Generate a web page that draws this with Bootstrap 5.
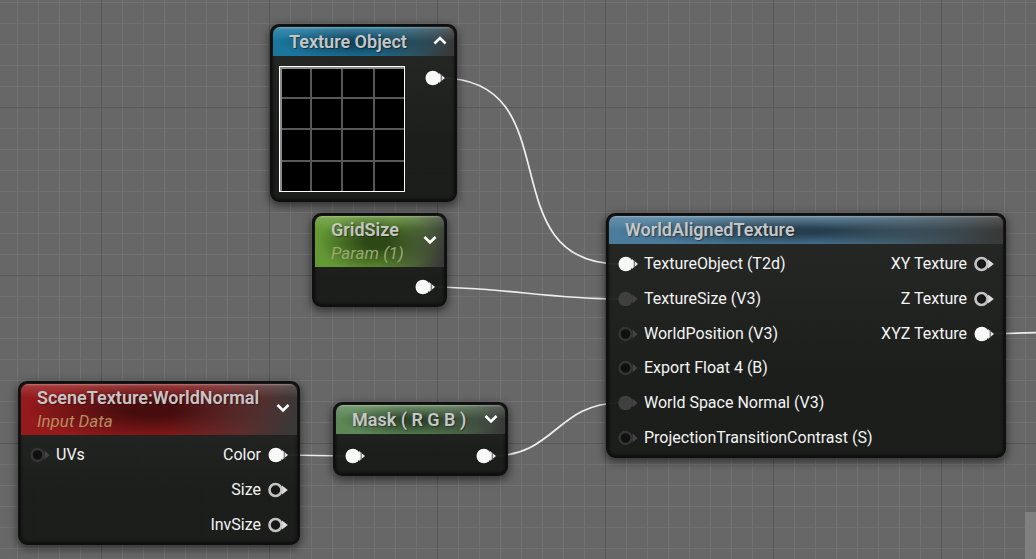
<!DOCTYPE html>
<html lang="en">
<head>
<meta charset="utf-8">
<meta name="viewport" content="width=device-width, initial-scale=1">
<title>Material Graph</title>
<link href="https://cdn.jsdelivr.net/npm/bootstrap@5.3.0/dist/css/bootstrap.min.css" rel="stylesheet">
<style>
  body { font-family: Roboto, "Liberation Sans", sans-serif; font-size: 16px; line-height: 24px; color: #f4f4f4; }
  .graph {
    background-color: #676767;
    background-image:
      linear-gradient(#585858 1px, transparent 1px),
      linear-gradient(90deg, #585858 1px, transparent 1px),
      linear-gradient(#727272 1px, transparent 1px),
      linear-gradient(90deg, #727272 1px, transparent 1px);
    background-size: 168px 168px, 168px 168px, 21px 21px, 21px 21px;
    background-position: 0 107px, 101px 0, 0 2px, 17px 0;
  }
  .wires { left: 0; top: 0; pointer-events: none; }
  .wires path { fill: none; stroke: #eee; stroke-width: 1.7; }
  .node {
    background: linear-gradient(rgba(34,36,34,.93), rgba(23,25,23,.94) 70%);
    border: 2px solid #0e0f0e; border-radius: 9px; padding: 1px;
    box-shadow: 0 3px 8px 1px rgba(0,0,0,.5), inset 0 0 3px 1px rgba(0,0,0,.6);
  }
  .node-head {
    padding: 2px 7px 2px 16px; border-radius: 7px 7px 0 0;
    background:
      linear-gradient(rgba(255,255,255,.4), rgba(255,255,255,.14) 2px, transparent 14px),
      linear-gradient(105deg, transparent 55%, #383938 98%),
      radial-gradient(ellipse 46% 60% at 48% 52%, var(--deep) 20%, transparent 100%),
      var(--tone);
  }
  .node-head.roomy { padding-top: 3px; margin-bottom: 2px; }
  .node-title { font-size: 18px; line-height: 24px; font-weight: 600; color: #c6c6c6; text-shadow: 1px 1px 1px rgba(0,0,0,.4); }
  .node-sub { font-size: 17px; line-height: 23px; font-style: italic; color: var(--sub); }
  .node-body { padding: 8px 9px 5px; }
  .pins { display: flex; flex-direction: column; gap: 11px; list-style: none; margin: 0; padding: 0; }
  .pins li { display: flex; align-items: center; gap: 6px; }
  .pins-out li { gap: 7px; }
  .pins-spread { justify-content: space-between; gap: 0; }
  .toggle { line-height: 0; margin-bottom: 4px; }
  .roomy .toggle { margin-bottom: 2px; }
  .pin { display: block; flex: none; }
  .thumb { display: block; }
  .thumb-row { padding: 8px 9px 6px 6px; }
  .node-texture { left: 270px; top: 24px; width: 187px; min-height: 178px; --tone: #1b769d; --deep: #10455e; }
  .node-grid { left: 312px; top: 213px; width: 135px; min-height: 94px; --tone: #649834; --deep: #2d4815; --sub: #9aa870; }
  .node-world { left: 606px; top: 213px; width: 400px; min-height: 245px; --tone: #4b7c9b; --deep: #263f50; }
  .node-scene { left: 18px; top: 381px; width: 282px; min-height: 164px; --tone: #951a1b; --deep: #470d0e; --sub: #b58d60; }
  .node-mask { left: 333px; top: 402px; width: 175px; min-height: 74px; --tone: #5c8757; --deep: #2d452c; }
  .corner-panel { right: 0; top: 512px; bottom: 0; width: 11px; background: #808080; }
</style>
</head>
<body>
<svg width="0" height="0" class="position-absolute" aria-hidden="true">
  <defs>
    <symbol id="pin-on" viewBox="0 0 20 16">
      <path d="M14 3L20 8L14 13z" fill="#e8e8e8"/>
      <path d="M16.300 4v8" stroke="#444" stroke-width=".8"/>
      <circle cx="7.800" cy="8" r="7.300" fill="#f8f8f8"/>
    </symbol>
    <symbol id="pin-off" viewBox="0 0 20 16">
      <path d="M14 3.500L19.800 8L14 12.500z" fill="#ddd"/>
      <circle cx="7.500" cy="8" r="6" fill="#171717" stroke="#c4c4c4" stroke-width="2.600"/>
    </symbol>
    <symbol id="pin-dim" viewBox="0 0 20 16">
      <path d="M14.500 3.500L19.500 8L14.500 12.500z" fill="#444"/>
      <circle cx="7.500" cy="8" r="6" fill="#101010" stroke="#353535" stroke-width="2.400"/>
    </symbol>
    <symbol id="pin-dimfull" viewBox="0 0 20 16">
      <path d="M14.500 3.500L19.500 8L14.500 12.500z" fill="#444"/>
      <circle cx="7.600" cy="8" r="7.300" fill="#404040"/>
    </symbol>
    <symbol id="chev" viewBox="0 0 14 10"><path d="M1.500 2L7 7.500L12.500 2" fill="none" stroke="#fff" stroke-width="2.600"/></symbol>
    <symbol id="chev-up" viewBox="0 0 14 10"><path d="M1.500 7.500L7 2L12.500 7.500" fill="none" stroke="#fff" stroke-width="2.600"/></symbol>
  </defs>
</svg>

<main class="graph position-relative min-vh-100 overflow-hidden">
  <svg class="wires position-absolute w-100 h-100" aria-hidden="true">
    <path d="M440 78C573 78 487 264 620 264"/>
    <path d="M430 287C500 287 550 299 620 299"/>
    <path d="M285 455L348 456"/>
    <path d="M492 456C555 456 557 403 620 403"/>
    <path d="M988 334Q1020 333 1060 332"/>
  </svg>

  <section class="node node-texture position-absolute">
    <header class="node-head roomy d-flex align-items-center justify-content-between">
      <h2 class="node-title m-0">Texture Object</h2>
      <button type="button" class="toggle btn p-0 border-0" aria-label="Collapse Texture Object"><svg width="14" height="10"><use href="#chev-up"/></svg></button>
    </header>
    <div class="thumb-row d-flex justify-content-between">
      <svg class="thumb" width="126" height="126" role="img" aria-label="Grid texture preview">
        <rect x=".5" y=".5" width="125" height="125" fill="#000" stroke="#fff"/>
        <path d="M32 1v124M63 1v124M95 1v124M1 32h124M1 63h124M1 95h124" stroke="#585858" stroke-width="2"/>
        <path d="M2 125V2H125" fill="none" stroke="#8a8a8a" stroke-width="2"/>
        <rect x=".5" y=".5" width="125" height="125" fill="none" stroke="#fff"/>
      </svg>
      <svg class="pin mt-1" width="20" height="16"><use href="#pin-on"/></svg>
    </div>
  </section>

  <section class="node node-grid position-absolute">
    <header class="node-head d-flex align-items-center justify-content-between">
      <div>
        <h2 class="node-title m-0">GridSize</h2>
        <p class="node-sub m-0">Param (1)</p>
      </div>
      <button type="button" class="toggle btn p-0 border-0" aria-label="Expand GridSize"><svg width="14" height="10"><use href="#chev"/></svg></button>
    </header>
    <div class="node-body d-flex justify-content-end">
      <svg class="pin my-1" width="20" height="16"><use href="#pin-on"/></svg>
    </div>
  </section>

  <section class="node node-world position-absolute d-flex flex-column">
    <header class="node-head"><h2 class="node-title m-0">WorldAlignedTexture</h2></header>
    <div class="node-body d-flex flex-grow-1 justify-content-between">
      <ul class="pins pins-spread">
        <li><svg class="pin" width="20" height="16"><use href="#pin-on"/></svg>TextureObject (T2d)</li>
        <li><svg class="pin" width="20" height="16"><use href="#pin-dimfull"/></svg>TextureSize (V3)</li>
        <li><svg class="pin" width="20" height="16"><use href="#pin-dim"/></svg>WorldPosition (V3)</li>
        <li><svg class="pin" width="20" height="16"><use href="#pin-dim"/></svg>Export Float 4 (B)</li>
        <li><svg class="pin" width="20" height="16"><use href="#pin-dimfull"/></svg>World Space Normal (V3)</li>
        <li><svg class="pin" width="20" height="16"><use href="#pin-dim"/></svg>ProjectionTransitionContrast (S)</li>
      </ul>
      <ul class="pins pins-out align-items-end">
        <li>XY Texture<svg class="pin" width="20" height="16"><use href="#pin-off"/></svg></li>
        <li>Z Texture<svg class="pin" width="20" height="16"><use href="#pin-off"/></svg></li>
        <li>XYZ Texture<svg class="pin" width="20" height="16"><use href="#pin-on"/></svg></li>
      </ul>
    </div>
  </section>

  <section class="node node-scene position-absolute d-flex flex-column">
    <header class="node-head d-flex align-items-center justify-content-between">
      <div>
        <h2 class="node-title m-0">SceneTexture:WorldNormal</h2>
        <p class="node-sub m-0">Input Data</p>
      </div>
      <button type="button" class="toggle btn p-0 border-0" aria-label="Expand SceneTexture:WorldNormal"><svg width="14" height="10"><use href="#chev"/></svg></button>
    </header>
    <div class="node-body d-flex flex-grow-1 justify-content-between">
      <ul class="pins">
        <li><svg class="pin" width="20" height="16"><use href="#pin-dim"/></svg>UVs</li>
      </ul>
      <ul class="pins pins-out pins-spread align-items-end">
        <li>Color<svg class="pin" width="20" height="16"><use href="#pin-on"/></svg></li>
        <li>Size<svg class="pin" width="20" height="16"><use href="#pin-off"/></svg></li>
        <li>InvSize<svg class="pin" width="20" height="16"><use href="#pin-off"/></svg></li>
      </ul>
    </div>
  </section>

  <section class="node node-mask position-absolute">
    <header class="node-head roomy d-flex align-items-center justify-content-between">
      <h2 class="node-title m-0">Mask ( R G B )</h2>
      <button type="button" class="toggle btn p-0 border-0" aria-label="Expand Mask"><svg width="14" height="10"><use href="#chev"/></svg></button>
    </header>
    <div class="node-body d-flex justify-content-between">
      <svg class="pin my-1" width="20" height="16"><use href="#pin-on"/></svg>
      <svg class="pin my-1" width="20" height="16"><use href="#pin-on"/></svg>
    </div>
  </section>

  <div class="corner-panel position-absolute"></div>
</main>
<script src="https://cdn.jsdelivr.net/npm/bootstrap@5.3.0/dist/js/bootstrap.bundle.min.js"></script>
</body>
</html>
